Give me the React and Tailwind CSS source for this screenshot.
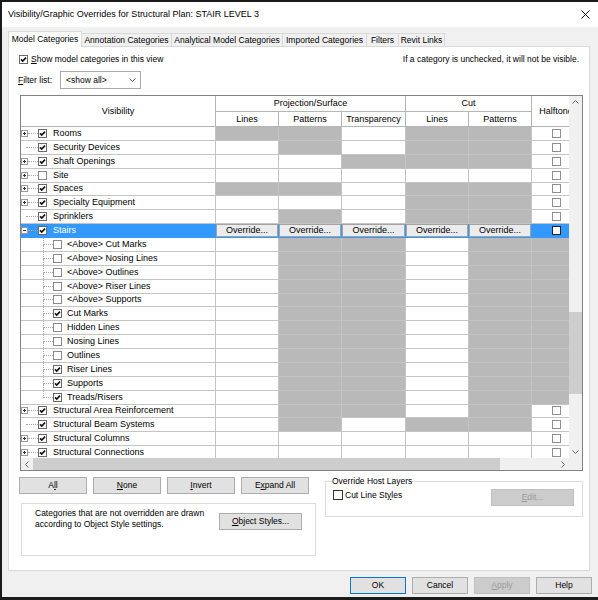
import React from 'react';

const CELLW = ['w-[63px]', 'w-[63px]', 'w-[64px]', 'w-[63px]', 'w-[63px]', 'w-[49px]'];

const top = (name, exp, chk, cells, sel = false) => ({ name, level: 0, exp, chk, cells, sel });
const child = (name, chk, last = false) => ({ name, level: 1, chk, last, cells: ['w', 'g', 'g', 'w', 'g', 'g'] });

const ROWS = [
  top('Rooms', '+', true, ['g', 'g', 'w', 'g', 'g', 'c']),
  top('Security Devices', null, true, ['w', 'g', 'w', 'g', 'g', 'c']),
  top('Shaft Openings', '+', true, ['w', 'w', 'g', 'g', 'g', 'c']),
  top('Site', '+', false, ['w', 'w', 'w', 'w', 'w', 'c']),
  top('Spaces', '+', true, ['g', 'g', 'w', 'g', 'g', 'c']),
  top('Specialty Equipment', '+', true, ['w', 'w', 'w', 'g', 'g', 'c']),
  top('Sprinklers', null, true, ['w', 'g', 'w', 'g', 'g', 'c']),
  top('Stairs', '-', true, ['o', 'o', 'o', 'o', 'o', 'c'], true),
  child('<Above> Cut Marks', false),
  child('<Above> Nosing Lines', false),
  child('<Above> Outlines', false),
  child('<Above> Riser Lines', false),
  child('<Above> Supports', false),
  child('Cut Marks', true),
  child('Hidden Lines', false),
  child('Nosing Lines', false),
  child('Outlines', false),
  child('Riser Lines', true),
  child('Supports', true),
  child('Treads/Risers', true, true),
  top('Structural Area Reinforcement', '+', true, ['w', 'g', 'g', 'w', 'g', 'c']),
  top('Structural Beam Systems', null, true, ['w', 'g', 'w', 'g', 'g', 'c']),
  top('Structural Columns', '+', true, ['w', 'w', 'w', 'w', 'w', 'c']),
  top('Structural Connections', '+', true, ['w', 'w', 'w', 'w', 'w', 'c']),
];

function Check({ checked }) {
  return (
    <svg width="9" height="9" viewBox="0 0 9 9" className="shrink-0 block">
      <rect x="0.5" y="0.5" width="8" height="8" fill="#fff" stroke={checked ? '#6a6a6a' : '#8a8a8a'} />
      {checked && <path d="M2 4.4 L3.7 6.1 L7 2.6" fill="none" stroke="#111" strokeWidth="1.6" />}
    </svg>
  );
}

function Box({ sel }) {
  return (
    <svg width="9" height="9" viewBox="0 0 9 9" className="shrink-0 block">
      <rect x="0.5" y="0.5" width="8" height="8" fill="#fff" stroke={sel ? '#222' : '#8e8e8e'} />
    </svg>
  );
}

function Expander({ open }) {
  return (
    <svg width="7" height="7" viewBox="0 0 7 7" className="shrink-0 block">
      <rect x="0.5" y="0.5" width="6" height="6" fill="#fff" stroke="#9a9a9a" />
      <path d="M2 3.5H5" stroke="#333" />
      {!open && <path d="M3.5 2V5" stroke="#333" />}
    </svg>
  );
}

function VisCell({ r }) {
  const sel = r.sel;
  return (
    <div
      className={`w-[195px] h-full shrink-0 border-r border-b flex items-center ${
        sel ? 'bg-[#3399ff] border-[#3399ff] text-white' : 'bg-white border-[#c4c4c4]'
      }`}
    >
      {r.level === 0 ? (
        <>
          {r.exp ? <Expander open={r.exp === '-'} /> : <div className="w-[5px] shrink-0" />}
          <div className={`${r.exp ? 'w-[10px]' : 'w-[12px]'} shrink-0 border-t border-dotted border-[#a8a8a8]`} />
          <Check checked={r.chk} />
          <span className="ml-[6px] whitespace-nowrap leading-none">{r.name}</span>
        </>
      ) : (
        <>
          <div className="w-[22px] shrink-0" />
          <div className="w-[10px] h-full shrink-0 flex flex-col">
            <div className="flex-1 border-l border-b border-dotted border-[#a8a8a8]" />
            <div className={`flex-1 ${r.last ? '' : 'border-l border-dotted border-[#a8a8a8]'}`} />
          </div>
          <Check checked={r.chk} />
          <span className="ml-[5px] whitespace-nowrap leading-none">{r.name}</span>
        </>
      )}
    </div>
  );
}

function DataCell({ c, w, sel }) {
  if (c === 'o')
    return (
      <div className={`${w} h-full shrink-0 border-r border-b border-[#3399ff] flex`}>
        <div className="flex-1 bg-[#ececec] border border-[#a3a3a3] flex items-center justify-center leading-none whitespace-nowrap">
          Override...
        </div>
      </div>
    );
  if (c === 'c')
    return (
      <div
        className={`${w} h-full shrink-0 border-r border-b flex items-center justify-center ${
          sel ? 'bg-[#3399ff] border-[#3399ff]' : 'bg-white border-[#c4c4c4]'
        }`}
      >
        <Box sel={sel} />
      </div>
    );
  return (
    <div
      className={`${w} h-full shrink-0 border-r border-b border-[#c4c4c4] ${c === 'g' ? 'bg-[#b9b9b9]' : 'bg-white'}`}
    />
  );
}

function Row({ r }) {
  return (
    <div className="flex h-[13.88px] w-[560px] shrink-0">
      <VisCell r={r} />
      {r.cells.map((c, i) => (
        <DataCell key={i} c={c} w={CELLW[i]} sel={r.sel} />
      ))}
    </div>
  );
}

const HC = 'border-r border-b border-[#b5b5b5] flex items-center justify-center leading-none whitespace-nowrap';

function Header() {
  return (
    <div className="flex h-[31px] w-[560px] shrink-0 bg-white">
      <div className={`w-[195px] shrink-0 ${HC}`}>Visibility</div>
      <div className="w-[190px] shrink-0 flex flex-col">
        <div className={`h-[16px] ${HC}`}>Projection/Surface</div>
        <div className="flex h-[15px]">
          <div className={`w-[63px] shrink-0 ${HC}`}>Lines</div>
          <div className={`w-[63px] shrink-0 ${HC}`}>Patterns</div>
          <div className={`w-[64px] shrink-0 ${HC}`}>Transparency</div>
        </div>
      </div>
      <div className="w-[126px] shrink-0 flex flex-col">
        <div className={`h-[16px] ${HC}`}>Cut</div>
        <div className="flex h-[15px]">
          <div className={`w-[63px] shrink-0 ${HC}`}>Lines</div>
          <div className={`w-[63px] shrink-0 ${HC}`}>Patterns</div>
        </div>
      </div>
      <div className={`w-[49px] shrink-0 ${HC}`}>Halftone</div>
    </div>
  );
}

const Chev = ({ d, w = 7, h = 4 }) => (
  <svg width={w} height={h} viewBox={`0 0 ${w} ${h}`} className="block">
    <path d={d} fill="none" stroke="#606060" strokeWidth="1" />
  </svg>
);

function Table() {
  return (
    <div className="ml-[11px] w-[563px] h-[376px] border border-[#828282] flex flex-col shrink-0">
      <div className="flex h-[362px]">
        <div className="w-[548px] overflow-hidden flex flex-col">
          <Header />
          <div className="w-[560px] h-[331px] overflow-hidden flex flex-col">
            {ROWS.map((r, i) => (
              <Row key={i} r={r} />
            ))}
          </div>
        </div>
        <div className="w-[13px] bg-[#f0f0f0] flex flex-col shrink-0">
          <div className="h-[12px] flex items-center justify-center">
            <Chev d="M0.5 3.5 L3.5 0.5 L6.5 3.5" />
          </div>
          <div className="flex-1">
            <div className="mt-[204px] h-[82px] bg-[#cdcdcd]" />
          </div>
          <div className="h-[12px] flex items-center justify-center">
            <Chev d="M0.5 0.5 L3.5 3.5 L6.5 0.5" />
          </div>
        </div>
      </div>
      <div className="flex h-[12px] bg-[#f0f0f0]">
        <div className="w-[12px] flex items-center justify-center">
          <Chev w={4} h={7} d="M3.5 0.5 L0.5 3.5 L3.5 6.5" />
        </div>
        <div className="w-[524px]">
          <div className="w-[467px] h-full bg-[#cdcdcd]" />
        </div>
        <div className="w-[12px] flex items-center justify-center">
          <Chev w={4} h={7} d="M0.5 0.5 L3.5 3.5 L0.5 6.5" />
        </div>
        <div className="w-[13px]" />
      </div>
    </div>
  );
}

const BTN = 'h-[17px] bg-[#e1e1e1] border border-[#adadad] flex items-center justify-center leading-none whitespace-nowrap';

const TABS = [
  ['Model Categories', 'w-[74px]', true],
  ['Annotation Categories', 'w-[91px]', false],
  ['Analytical Model Categories', 'w-[112px]', false],
  ['Imported Categories', 'w-[85px]', false],
  ['Filters', 'w-[33px]', false],
  ['Revit Links', 'w-[47px]', false],
];

export default function App() {
  return (
    <div className="w-[598px] h-[600px] bg-[#1b1b1b] pt-[2px] pl-[2px] pb-[3px] flex flex-col font-['Liberation_Sans',Arial,sans-serif] text-[9px] text-black overflow-hidden">
      <div className="flex-1 bg-[#f0f0f0] flex flex-col">
        {/* Title bar */}
        <div className="h-[25px] bg-white flex items-center justify-between pl-[6px] pr-[8px] shrink-0">
          <span className="leading-none whitespace-nowrap">Visibility/Graphic Overrides for Structural Plan: STAIR LEVEL 3</span>
          <svg width="9" height="9" viewBox="0 0 9 9" className="block">
            <path d="M0.5 0.5 L8.5 8.5 M8.5 0.5 L0.5 8.5" stroke="#111" strokeWidth="1" />
          </svg>
        </div>

        <div className="flex flex-col pl-[6px] pr-[8px] pt-[4px]">
          {/* Tabs */}
          <div className="flex items-end h-[15px] text-[8.5px]">
            {TABS.map(([t, w, sel]) => (
              <div
                key={t}
                className={`${w} shrink-0 flex items-center justify-center leading-none whitespace-nowrap border-t border-l border-r ${
                  sel
                    ? 'h-[16px] -mb-[1px] bg-white border-[#d9d9d9] relative z-10'
                    : 'h-[13px] bg-[#f0f0f0] border-[#d9d9d9] -ml-[1px]'
                }`}
              >
                {t}
              </div>
            ))}
          </div>

          {/* Panel */}
          <div className="h-[525px] bg-white border border-[#d9d9d9] flex flex-col">
            <div className="mt-[6px] h-[13px] flex items-center justify-between pr-[10px] text-[8.5px]">
              <div className="flex items-center ml-[10px]">
                <Check checked />
                <span className="ml-[3px] leading-none whitespace-nowrap">
                  <u>S</u>how model categories in this view
                </span>
              </div>
              <span className="leading-none whitespace-nowrap">If a category is unchecked, it will not be visible.</span>
            </div>

            <div className="mt-[5px] h-[18px] flex items-center ml-[9px] text-[8.5px]">
              <span className="w-[42px] shrink-0 leading-none whitespace-nowrap">
                <u>F</u>ilter list:
              </span>
              <div className="w-[81px] h-[18px] bg-white border border-[#a9a9a9] flex items-center justify-between pl-[5px] pr-[4px]">
                <span className="leading-none whitespace-nowrap">{'<show all>'}</span>
                <Chev d="M0.5 0.5 L3.5 3.5 L6.5 0.5" />
              </div>
            </div>

            <div className="mt-[6px]">
              <Table />
            </div>

            {/* Lower section */}
            <div className="mt-[6px] flex text-[8.5px]">
              <div className="ml-[10px] w-[306px] shrink-0 flex flex-col">
                <div className="flex gap-[6px]">
                  <div className={`w-[68px] ${BTN}`}>
                    A<u>l</u>l
                  </div>
                  <div className={`w-[68px] ${BTN}`}>
                    <u>N</u>one
                  </div>
                  <div className={`w-[68px] ${BTN}`}>
                    <u>I</u>nvert
                  </div>
                  <div className={`w-[68px] ${BTN}`}>
                    E<u>x</u>pand All
                  </div>
                </div>
                <div className="mt-[9px] ml-[2px] w-[295px] h-[53px] border border-[#dcdcdc] flex items-start pt-[4px] pl-[13px]">
                  <div className="w-[184px] shrink-0 leading-[11px]">
                    Categories that are not overridden are drawn according to Object Style settings.
                  </div>
                  <div className={`mt-[5px] w-[83px] ${BTN}`}>
                    <u>O</u>bject Styles...
                  </div>
                </div>
              </div>
              <fieldset className="ml-[0px] w-[258px] h-[40px] border border-[#dcdcdc] pl-[7px] pr-[8px] flex">
                <legend className="ml-[-1px] px-0 leading-[9px] whitespace-nowrap">Override Host Layers</legend>
                <div className="flex items-start justify-between w-full pt-[3px]">
                  <div className="flex items-center mt-[1px]">
                    <svg width="10" height="10" viewBox="0 0 10 10" className="block shrink-0">
                      <rect x="0.5" y="0.5" width="9" height="9" fill="#fff" stroke="#333" />
                    </svg>
                    <span className="ml-[2px] leading-none whitespace-nowrap">
                      Cut Line St<u>y</u>les
                    </span>
                  </div>
                  <div className="w-[83px] h-[17px] bg-[#cccccc] border border-[#bfbfbf] text-[#9a9a9a] flex items-center justify-center leading-none">
                    <u>E</u>dit...
                  </div>
                </div>
              </fieldset>
            </div>
          </div>
        </div>

        {/* Bottom buttons */}
        <div className="mt-[6px] flex justify-end gap-[6px] pr-[6px] text-[8.5px]">
          <div className="w-[56px] h-[17px] bg-[#e1e1e1] border border-[#0078d7] flex items-center justify-center leading-none">OK</div>
          <div className={`w-[56px] ${BTN}`}>Cancel</div>
          <div className="w-[56px] h-[17px] bg-[#cccccc] border border-[#bfbfbf] text-[#9a9a9a] flex items-center justify-center leading-none">
            <u>A</u>pply
          </div>
          <div className={`w-[56px] ${BTN}`}>Help</div>
        </div>
      </div>
    </div>
  );
}
